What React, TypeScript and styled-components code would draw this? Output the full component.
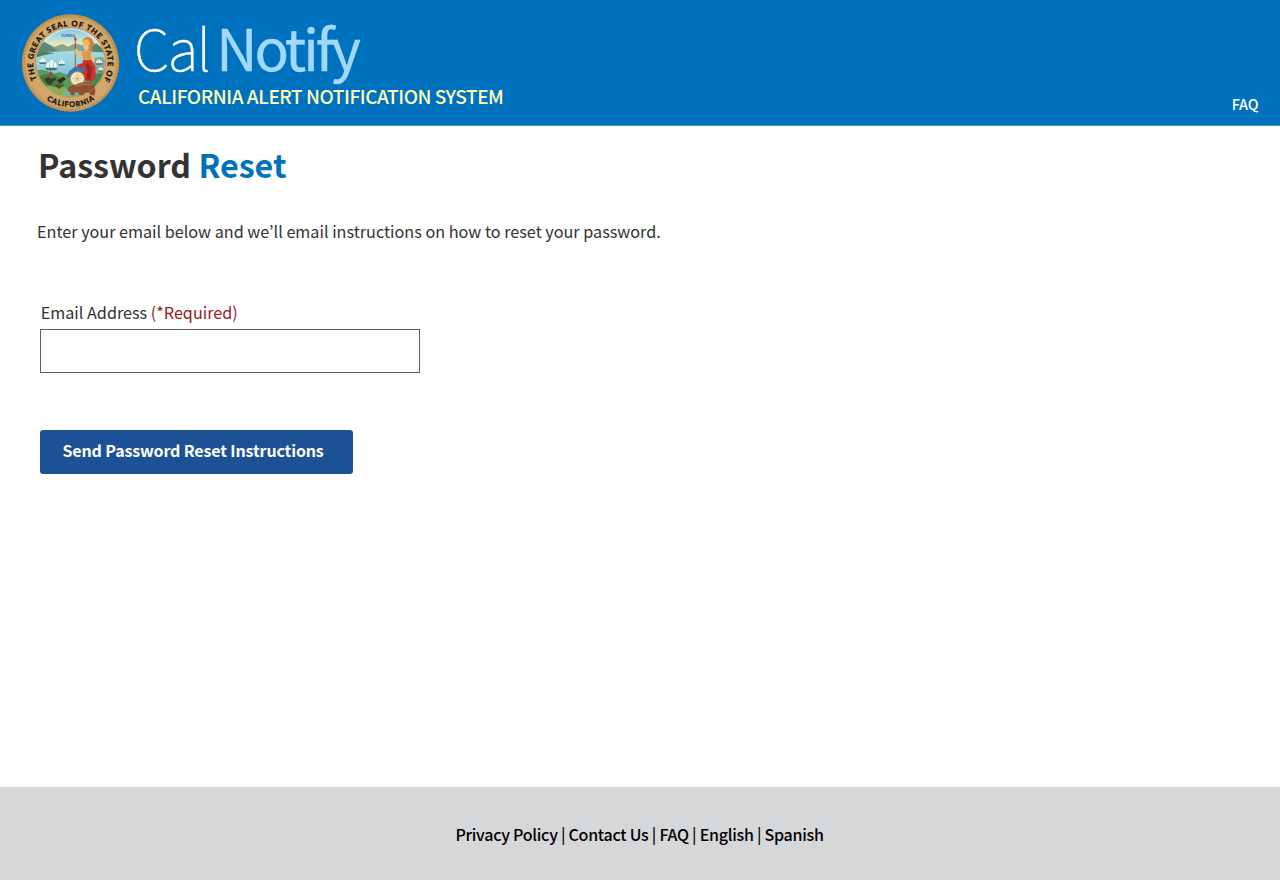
import React from "react";
import styled, { createGlobalStyle } from "styled-components";

const GlobalStyle = createGlobalStyle`
  * { box-sizing: border-box; }
  body {
    margin: 0;
    background: #fff;
    color: #333;
    font-family: "Noto Sans CJK KR", "Open Sans", sans-serif;
  }
`;

const Page = styled.div`
  display: flex;
  flex-direction: column;
  min-height: 880px;
`;

const Header = styled.header`
  display: flex;
  justify-content: space-between;
  height: 126px;
  background: #0071bc;
  border-bottom: 1px solid #3c93cf;
`;

const Brand = styled.a`
  display: flex;
  padding: 14px 0 0 21px;
  color: inherit;
  text-decoration: none;
`;

const SealSvg = styled.svg`
  display: block;
  width: 99px;
  height: 98px;
`;

const BrandText = styled.div`
  padding-left: 14px;
`;

const BrandName = styled.div`
  height: 66px;
  line-height: 64px;
  font-size: 57px;
  white-space: nowrap;
`;

const BrandLight = styled.span`
  color: #fff;
  font-weight: 100;
  letter-spacing: -1.5px;
  -webkit-text-stroke: 0.5px #fff;
`;

const BrandStrong = styled.span`
  margin-left: -4.5px;
  color: #a0d8ff;
  font-weight: 400;
  letter-spacing: -3.1px;
  -webkit-text-stroke: 0.4px #a0d8ff;
`;

const Tagline = styled.div`
  padding: 1px 0 0 4px;
  height: 30px;
  line-height: 30px;
  font-size: 19px;
  font-weight: 500;
  letter-spacing: -0.45px;
  color: #ffffbe;
  white-space: nowrap;
`;

const HeaderNav = styled.nav`
  align-self: flex-end;
  padding: 0 21.5px 9px 0;
`;

const HeaderLink = styled.a`
  display: block;
  font-size: 14.4px;
  font-weight: 500;
  letter-spacing: -0.1px;
  line-height: 24px;
  color: #fff;
  text-decoration: none;
`;

const Main = styled.main`
  flex: 1;
  padding: 14px 38px 0;
`;

const Title = styled.h1`
  margin: 0;
  height: 48px;
  line-height: 48px;
  font-size: 32.2px;
  font-weight: 700;
  color: #333;
`;

const Accent = styled.span`
  color: #0071bc;
`;

const Intro = styled.p`
  margin: 30px 0 0 -1px;
  line-height: 26px;
  font-size: 16.2px;
`;

const Form = styled.form`
  display: flex;
  flex-direction: column;
  align-items: flex-start;
  padding: 55px 0 0 2px;
`;

const Label = styled.label`
  padding-left: 0.7px;
  line-height: 26px;
  font-size: 16.2px;
`;

const Required = styled.span`
  color: #981b1e;
`;

const Input = styled.input`
  width: 380px;
  height: 44px;
  margin-top: 4px;
  padding: 0 10px;
  border: 1px solid #5b616b;
  border-radius: 0;
  background: #fff;
  font: inherit;
  outline: none;
`;

const Button = styled.button`
  width: 313px;
  height: 44px;
  margin-top: 57px;
  padding: 0 0 4px 22.5px;
  border: 0;
  border-radius: 3px;
  background: #1c5295;
  color: #fff;
  font-family: inherit;
  font-size: 16px;
  font-weight: 700;
  letter-spacing: -0.14px;
  line-height: 40px;
  text-align: left;
  white-space: nowrap;
`;

const Footer = styled.footer`
  height: 93px;
  padding: 34px 1px 0 0;
  background: #d6d7d9;
  text-align: center;
  font-size: 16px;
  font-weight: 500;
  letter-spacing: -0.27px;
  line-height: 26px;
  color: #000;
`;

const FooterLink = styled.a`
  color: #000;
  text-decoration: none;
`;

const Ship = ({ x, y, s }: { x: number; y: number; s: number }) => (
  <g transform={`translate(${x} ${y}) scale(${s})`}>
    <path d="M-14 6H14L10 11H-10Z" fill="#4a6a72" />
    <path d="M-12 4L-9-6-4-8-5 4ZM-3 4L-2-12 4-10 3 4ZM5 4L6-8 11-4 12 4Z" fill="#fbfbf5" />
  </g>
);

const Seal = () => (
  <SealSvg viewBox="18 18 297 294" role="img" aria-label="The Great Seal of the State of California">
    <defs>
      <path id="topArc" d="M66 216A112 112 0 1 1 267 216" />
      <path id="bottomArc" d="M88 271A132 132 0 0 0 245 271" />
      <clipPath id="scene">
        <circle cx="166.500" cy="163" r="103" />
      </clipPath>
      <linearGradient id="sky" x1="0" y1="0" x2="0" y2="1">
        <stop offset="0" stopColor="#7fc4e8" />
        <stop offset="0.450" stopColor="#b5dcd8" />
        <stop offset="0.800" stopColor="#f8efb8" />
      </linearGradient>
      <linearGradient id="sea" x1="0" y1="0" x2="0" y2="1">
        <stop offset="0" stopColor="#a9dbe6" />
        <stop offset="1" stopColor="#79c0d2" />
      </linearGradient>
    </defs>
    <circle cx="166.500" cy="165" r="146" fill="#b98c4e" />
    <circle cx="166.500" cy="165" r="142" fill="#cfa265" />
    <circle cx="166.500" cy="165" r="139" fill="none" stroke="#b08447" strokeWidth="3" strokeDasharray="6 4" />
    <circle cx="166.500" cy="165" r="134" fill="#d2a76b" />
    <circle cx="166.500" cy="163" r="106" fill="#ecd7a4" />
    <g clipPath="url(#scene)">
      <rect x="60" y="56" width="214" height="75" fill="url(#sky)" />
      <path d="M86 104A100 100 0 0 1 246 102" fill="none" stroke="#eaf5f5" strokeWidth="5" strokeDasharray="3 3" />
      <path d="M60 130L92 104 118 116 142 108 160 116 180 106 200 112 233 102 274 130V143H60Z" fill="#8aa58c" />
      <path d="M228 116L244 106 274 130V143H222Z" fill="#4f8a68" />
      <path d="M60 121L88 101 118 122 140 134 60 141Z" fill="#5f8574" />
      <path d="M60 136C96 129 130 132 172 128L274 134V220H60Z" fill="url(#sea)" />
      <path d="M56 134Q84 130 119 135L86 142 56 150Z" fill="#4f8056" />
      <path d="M56 190Q80 180 98 190T132 192L158 200 178 216 211 206 274 180V278H56Z" fill="#5c9a5c" />
      <path d="M66 208Q84 196 104 198T140 216L150 236 118 240 84 236Z" fill="#4c7a41" />
      <path d="M70 222Q100 240 150 236L166 262 150 272H96Z" fill="#86ad57" />
      <path d="M150 246Q190 262 250 246L240 270H140Z" fill="#78b398" />
      <path d="M236 150L262 146 272 158V192L240 200Z" fill="#86a7a0" />
      <path d="M234 200L270 192 262 226 236 250Z" fill="#3f8a4a" />
    </g>
    <Ship x={109} y={172} s={1.35} />
    <Ship x={83} y={159} s={0.8} />
    <Ship x={140} y={164} s={0.75} />
    <Ship x={252} y={162} s={0.75} />
    <Ship x={257} y={184} s={0.6} />
    <path d="M88 214l12-8 9 6 10-5 5 8-11 6-6 11-10-5z" fill="#33402a" />
    <path d="M100 203l5-14 8 5-2 14z" fill="#9c4a38" />
    <path d="M126 217l19-11 8 7-18 14z" fill="#33281f" />
    <path d="M118 234l16-6 9 7-10 8z" fill="#5d4a2c" />
    <path d="M181 92V180" stroke="#9d4a2c" strokeWidth="2.500" />
    <path d="M181 84L185 94 181 100 177 94Z" fill="#c0482e" />
    <path d="M202 104Q204 86 220 87 236 90 235 112L230 132 222 134 224 110 212 100Z" fill="#e07a32" />
    <path d="M203 107Q204 95 215 94 226 98 225 110L219 112Z" fill="#f2c152" />
    <path d="M205 108L220 110 221 123 212 127 205 119Z" fill="#efc19b" />
    <path d="M179 124L185 122 199 134 212 126 229 131 240 158 232 166 223 152 200 150 182 138Z" fill="#eabd8f" />
    <path d="M200 132L213 128 228 133 229 158 206 160Z" fill="#dc9a4c" />
    <path d="M204 157L230 156 241 176 242 206 230 222 208 216 190 200 186 182 202 174Z" fill="#cd3328" />
    <path d="M219 163L231 182 227 214 213 214 219 188 209 176Z" fill="#a02226" />
    <path d="M178 178L204 168 214 178 206 192 186 196 168 208 154 206 162 190Z" fill="#3f74ad" />
    <path d="M186 170L208 164 214 176 196 182Z" fill="#cd3328" />
    <circle cx="187" cy="212" r="21" fill="#f4edd6" stroke="#b39852" strokeWidth="3" />
    <path d="M187 196V228M171 212H203M176 201L198 223M198 201L176 223" stroke="#d8b257" strokeWidth="2.500" />
    <path d="M160 240Q166 229 180 231 192 224 208 222 228 220 238 232 243 244 239 262H226L224 254 210 254 206 262H193L190 253 180 252 178 262H167L166 252 159 250Z" fill="#8d5133" />
    <path d="M184 234Q206 224 230 232" fill="none" stroke="#ac6c45" strokeWidth="5" />
    <circle cx="166.500" cy="163" r="105" fill="none" stroke="#a98244" strokeWidth="2.500" />
    <text x="139" y="88" fontFamily="Liberation Sans, sans-serif" fontSize="11" fontWeight="700" fill="#3f7fae" textLength="41">EUREKA</text>
    <g fontFamily="Lato, sans-serif" fontSize="23" fontWeight="900" fill="#171411" stroke="#171411" strokeWidth="0.800">
      <text>
        <textPath href="#topArc" textLength="454" startOffset="2">THE GREAT SEAL OF THE STATE OF</textPath>
      </text>
      <text fontSize="22">
        <textPath href="#bottomArc" textLength="153" startOffset="8">CALIFORNIA</textPath>
      </text>
    </g>
  </SealSvg>
);

const links = ["Privacy Policy", "Contact Us", "FAQ", "English", "Spanish"];

export default function App() {
  return (
    <Page>
      <GlobalStyle />
      <Header>
        <Brand>
          <Seal />
          <BrandText>
            <BrandName>
              <BrandLight>Cal </BrandLight>
              <BrandStrong>Notify</BrandStrong>
            </BrandName>
            <Tagline>CALIFORNIA ALERT NOTIFICATION SYSTEM</Tagline>
          </BrandText>
        </Brand>
        <HeaderNav>
          <HeaderLink>FAQ</HeaderLink>
        </HeaderNav>
      </Header>
      <Main>
        <Title>
          Password <Accent>Reset</Accent>
        </Title>
        <Intro>Enter your email below and we’ll email instructions on how to reset your password.</Intro>
        <Form onSubmit={(e) => e.preventDefault()}>
          <Label htmlFor="email">
            Email Address <Required>(*Required)</Required>
          </Label>
          <Input id="email" type="email" />
          <Button type="submit">Send Password Reset Instructions</Button>
        </Form>
      </Main>
      <Footer>
        {links.map((label, i) => (
          <React.Fragment key={label}>
            {i > 0 && " | "}
            <FooterLink>{label}</FooterLink>
          </React.Fragment>
        ))}
      </Footer>
    </Page>
  );
}
